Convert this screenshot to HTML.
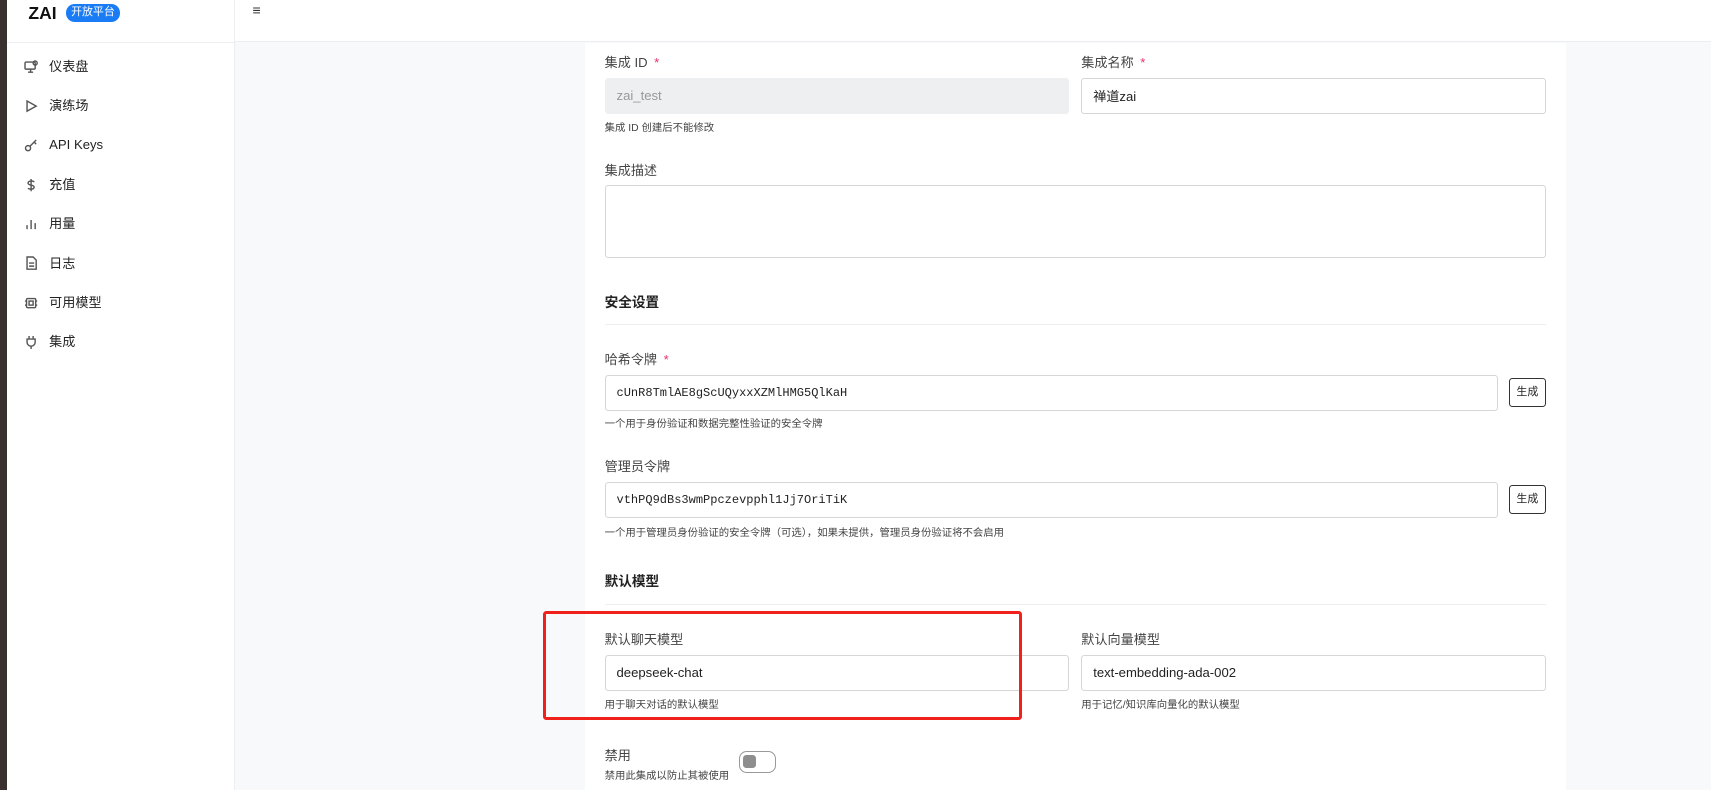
<!DOCTYPE html>
<html><head><meta charset="utf-8"><style>
html{zoom:1.0933}
*{box-sizing:border-box;margin:0;padding:0}
body{width:1565px;height:723px;overflow:hidden;background:#f8f9fb;font-family:"Liberation Sans","Noto Sans CJK SC",sans-serif;color:#222;position:relative}
.a{position:absolute}
.strip{left:0;top:0;width:6px;height:723px;background:#3b3030}
.side{left:6px;top:0;width:209px;height:723px;background:#fff;border-right:1px solid #eceef1}
.hdr{left:215px;top:0;right:0;height:38px;background:#fff;border-bottom:1px solid #eceef1}
.sline{left:6px;top:38px;width:209px;height:1px;background:#eceef1}
.logo{left:26px;top:3px;font-weight:bold;font-size:16px;color:#111}
.badge{left:60px;top:4px;width:50px;height:16px;border-radius:8px;background:#1a7cf5;color:#fff;font-size:10px;line-height:16px;text-align:center}
.mi{left:22px;font-size:12px;color:#222;height:20px;line-height:20px;display:flex;align-items:center}
.mi svg{width:13px;height:13px;margin-right:10px;stroke:#555;fill:none;stroke-width:1.4}
.card{left:535px;top:39px;width:897px;height:684px;background:#fff}
.lbl{font-size:12px;color:#444}
.req{color:#e8336d;margin-left:6px}
.inp{border:1px solid #d6d6d6;border-radius:3px;background:#fff;font-size:12px;padding-left:10px;display:flex;align-items:center;color:#222}
.mono{font-family:"Liberation Mono",monospace;font-size:11px}
.help{font-size:9.5px;color:#444}
.h{font-size:12.5px;font-weight:bold;color:#222}
.hr{height:1px;background:#eceef1;left:553px;width:861px}
.btn{border:1px solid #333;border-radius:3px;font-size:10px;text-align:center;line-height:24px;width:34px;height:26px;color:#222;background:#fff}
</style></head><body>
<div class="a strip"></div>
<div class="a side"></div>
<div class="a hdr"></div>
<div class="a sline"></div>
<div class="a logo">ZAI</div>
<div class="a badge">开放平台</div>
<div class="a" style="left:231px;top:3px;font-size:13px;color:#333">≡</div>

<div class="a mi" style="top:51px"><svg viewBox="0 0 14 14"><rect x="1" y="2" width="10" height="7" rx="1"/><path d="M4 12h5M6.5 9v3"/><circle cx="11" cy="3" r="2"/></svg>仪表盘</div>
<div class="a mi" style="top:87px"><svg viewBox="0 0 14 14"><path d="M3 2l9 5-9 5z"/></svg>演练场</div>
<div class="a mi" style="top:123px"><svg viewBox="0 0 14 14"><circle cx="4" cy="10" r="2.5"/><path d="M6 8l6-6M10 4l2 2"/></svg>API Keys</div>
<div class="a mi" style="top:159px"><svg viewBox="0 0 14 14"><path d="M10 4c-1-1.5-6-1.5-6 1s6 1.5 6 4-5 2.5-6 1M7 1v12"/></svg>充值</div>
<div class="a mi" style="top:195px"><svg viewBox="0 0 14 14"><path d="M3 12V8M7 12V3M11 12V6"/></svg>用量</div>
<div class="a mi" style="top:231px"><svg viewBox="0 0 14 14"><path d="M3 1h6l3 3v9H3z M5 7h5M5 10h5"/></svg>日志</div>
<div class="a mi" style="top:267px"><svg viewBox="0 0 14 14"><rect x="2.5" y="2.5" width="9" height="9" rx="1"/><rect x="5" y="5" width="4" height="4"/><path d="M1 5h1M1 9h1M12 5h1M12 9h1"/></svg>可用模型</div>
<div class="a mi" style="top:303px"><svg viewBox="0 0 14 14"><path d="M5 1v3M9 1v3M3 4h8v3a4 4 0 0 1-8 0zM7 11v3"/></svg>集成</div>

<div class="a card"></div>

<div class="a lbl" style="left:553px;top:48px">集成 ID<span class="req">*</span></div>
<div class="a inp" style="left:553px;top:71px;width:425px;height:33px;background:#eeeff1;border-color:#eeeff1;color:#999">zai_test</div>
<div class="a help" style="left:553px;top:109px">集成 ID 创建后不能修改</div>
<div class="a lbl" style="left:989px;top:48px">集成名称<span class="req">*</span></div>
<div class="a inp" style="left:989px;top:71px;width:425px;height:33px">禅道zai</div>

<div class="a lbl" style="left:553px;top:146px">集成描述</div>
<div class="a inp" style="left:553px;top:169px;width:861px;height:67px"></div>

<div class="a h" style="left:553px;top:266px">安全设置</div>
<div class="a hr" style="top:296px"></div>

<div class="a lbl" style="left:553px;top:319px">哈希令牌<span class="req">*</span></div>
<div class="a inp mono" style="left:553px;top:343px;width:817px;height:33px">cUnR8TmlAE8gScUQyxxXZMlHMG5QlKaH</div>
<div class="a btn" style="left:1380px;top:346px">生成</div>
<div class="a help" style="left:553px;top:380px">一个用于身份验证和数据完整性验证的安全令牌</div>

<div class="a lbl" style="left:553px;top:417px">管理员令牌</div>
<div class="a inp mono" style="left:553px;top:441px;width:817px;height:33px">vthPQ9dBs3wmPpczevpphl1Jj7OriTiK</div>
<div class="a btn" style="left:1380px;top:444px">生成</div>
<div class="a help" style="left:553px;top:479px">一个用于管理员身份验证的安全令牌（可选），如果未提供，管理员身份验证将不会启用</div>

<div class="a h" style="left:553px;top:521px">默认模型</div>
<div class="a hr" style="top:552px"></div>

<div class="a lbl" style="left:553px;top:575px">默认聊天模型</div>
<div class="a inp" style="left:553px;top:599px;width:425px;height:33px">deepseek-chat</div>
<div class="a help" style="left:553px;top:637px">用于聊天对话的默认模型</div>
<div class="a lbl" style="left:989px;top:575px">默认向量模型</div>
<div class="a inp" style="left:989px;top:599px;width:425px;height:33px">text-embedding-ada-002</div>
<div class="a help" style="left:989px;top:637px">用于记忆/知识库向量化的默认模型</div>

<div class="a" style="left:497px;top:559px;width:438px;height:100px;border:3px solid #f0201a;border-radius:3px"></div>

<div class="a lbl" style="left:553px;top:681px">禁用</div>
<div class="a help" style="left:553px;top:702px">禁用此集成以防止其被使用</div>
<div class="a" style="left:676px;top:687px;width:34px;height:20px;border:1px solid #999;border-radius:7px;background:#fff"><div style="position:absolute;left:3px;top:3px;width:12px;height:12px;border-radius:3px;background:#8e8e8e"></div></div>
</body></html>
